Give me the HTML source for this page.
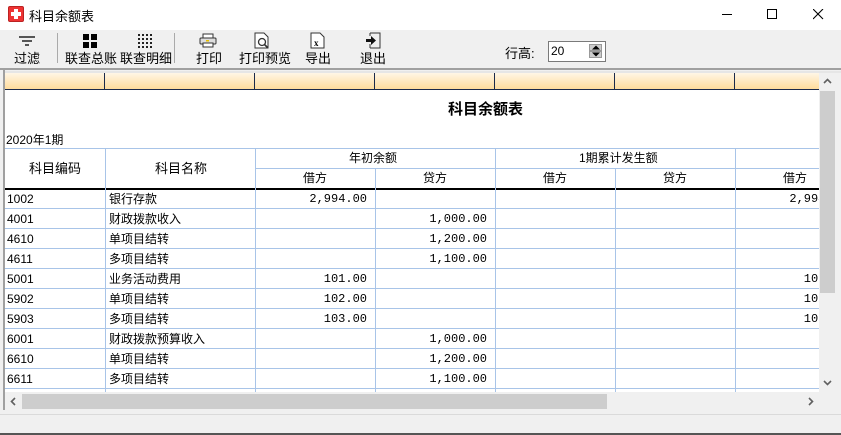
<!DOCTYPE html>
<html><head><meta charset="utf-8"><style>
*{margin:0;padding:0;box-sizing:border-box}
body{width:841px;height:435px;position:relative;overflow:hidden;background:#f0f0f0;font-family:"Liberation Sans","Noto Sans CJK SC",sans-serif;font-size:12px;color:#000}
.a{position:absolute}
.tb{left:0;top:0;width:841px;height:30px;background:#fff}
.btn{position:absolute;top:46px;font-size:13px;text-align:center}
.grid{left:5px;top:73px;width:814px;height:319px;background:#fff;overflow:hidden}
.hs{top:0;height:17px;background:linear-gradient(#fff6e6,#ffdc9c);border-bottom:1px solid #1c2a4a;border-right:1px solid #1c2a4a}
.vl{position:absolute;width:1px;background:#a8c4e8}
.hl{position:absolute;height:1px;background:#a8c4e8;left:0;width:900px}
.c{position:absolute;height:20px;line-height:20px;font-size:12px;white-space:nowrap}
.n{font-family:"Liberation Mono",monospace;font-size:12px;text-align:right}
</style></head><body>
<div class="a tb"></div>
<div class="a" style="left:8px;top:6px;width:16px;height:16px;background:#e33;border-radius:2px;border:1px solid #b22"><div style="position:absolute;left:5px;top:2px;width:4px;height:10px;background:#fff"></div><div style="position:absolute;left:2px;top:5px;width:10px;height:4px;background:#fff"></div></div>
<div class="a" style="left:29px;top:6px;font-size:13px">科目余额表</div>
<div class="a" style="left:722px;top:14px;width:10px;height:1px;background:#000"></div>
<div class="a" style="left:767px;top:9px;width:10px;height:10px;border:1px solid #000"></div>
<svg class="a" style="left:813px;top:9px" width="11" height="11"><path d="M0 0L10 10M10 0L0 10" stroke="#000" stroke-width="1.1"/></svg>
<!-- toolbar -->
<svg class="a" style="left:18px;top:36px" width="18" height="10"><path d="M1 1h16M4 5h10M7 9h4" stroke="#222" stroke-width="1.5"/></svg>
<div class="btn" style="left:14px;top:48px">过滤</div>
<div class="a" style="left:57px;top:33px;width:1px;height:30px;background:#aaa"></div>
<svg class="a" style="left:83px;top:34px" width="14" height="14"><rect x="0" y="0" width="6" height="6"/><rect x="8" y="0" width="6" height="6"/><rect x="0" y="8" width="6" height="6"/><rect x="8" y="8" width="6" height="6"/></svg>
<div class="btn" style="left:65px;top:48px">联查总账</div>
<svg class="a" style="left:138px;top:34px" width="14" height="14" fill="#222"><g id="r"><rect x="0" y="0" width="2" height="2"/><rect x="4" y="0" width="2" height="2"/><rect x="8" y="0" width="2" height="2"/><rect x="12" y="0" width="2" height="2"/></g><use href="#r" y="4"/><use href="#r" y="8"/><use href="#r" y="12"/></svg>
<div class="btn" style="left:120px;top:48px">联查明细</div>
<div class="a" style="left:174px;top:33px;width:1px;height:30px;background:#aaa"></div>
<svg class="a" style="left:199px;top:33px" width="18" height="15"><rect x="4" y="1" width="10" height="4" fill="#fff" stroke="#333"/><rect x="1" y="5" width="16" height="6" rx="1" fill="#ddd" stroke="#333"/><rect x="4" y="10" width="10" height="4" fill="#fff" stroke="#333"/><rect x="7" y="7" width="3" height="1.5" fill="#e8c000"/></svg>
<div class="btn" style="left:196px;top:48px">打印</div>
<svg class="a" style="left:254px;top:32px" width="16" height="17"><path d="M1 1h9l4 4v11H1z" fill="#fff" stroke="#333"/><circle cx="8" cy="10" r="3.5" fill="none" stroke="#333" stroke-width="1.3"/><path d="M10.5 12.5l3 3" stroke="#333" stroke-width="1.6"/></svg>
<div class="btn" style="left:239px;top:48px">打印预览</div>
<svg class="a" style="left:310px;top:32px" width="15" height="17"><path d="M1 1h9l4 4v11H1z" fill="#fff" stroke="#333"/><text x="4" y="14" font-size="9" font-family="Liberation Serif" font-weight="bold">x</text></svg>
<div class="btn" style="left:305px;top:48px">导出</div>
<svg class="a" style="left:365px;top:32px" width="16" height="17"><path d="M5 1h10v15H5M5 1v3M5 12v4" fill="none" stroke="#333"/><path d="M1 7h5V4l5 4.5-5 4.5V10H1z" fill="#111"/></svg>
<div class="btn" style="left:360px;top:48px">退出</div>
<div class="a" style="left:505px;top:43px;font-size:13px">行高:</div>
<div class="a" style="left:548px;top:41px;width:58px;height:21px;border:1px solid #7a7a7a;background:#fff;font-size:12px;line-height:19px;padding-left:2px">20</div>
<div class="a" style="left:589px;top:44px;width:13px;height:7px;background:#ccc;border:1px solid #999"></div>
<div class="a" style="left:589px;top:51px;width:13px;height:7px;background:#ccc;border:1px solid #999"></div>
<svg class="a" style="left:591px;top:45px" width="10" height="12"><path d="M1 4.5L5 0.5 9 4.5zM1 7.5L5 11.5 9 7.5z" fill="#000"/></svg>
<!-- grid frame -->
<div class="a" style="left:0;top:68px;width:841px;height:2px;background:#a0a0a0"></div>
<div class="a" style="left:3px;top:70px;width:2px;height:340px;background:#a0a0a0"></div>
<div class="a" style="left:5px;top:71px;width:836px;height:2px;background:#e6e6e6"></div>
<div class="a grid">
 <div class="a hs" style="left:0;width:100px"></div>
 <div class="a hs" style="left:100px;width:150px"></div>
 <div class="a hs" style="left:250px;width:120px"></div>
 <div class="a hs" style="left:370px;width:120px"></div>
 <div class="a hs" style="left:490px;width:120px"></div>
 <div class="a hs" style="left:610px;width:120px"></div>
 <div class="a hs" style="left:730px;width:120px"></div>
 <div class="a" style="left:443px;top:25px;font-size:15px;font-weight:bold">科目余额表</div>
 <div class="a" style="left:1px;top:58px;font-size:12px">2020年1期</div>
 <div class="hl" style="top:75px"></div>
 <div class="hl" style="top:95px;left:250px"></div>
 <div class="a" style="left:0;top:115px;width:900px;height:2px;background:#000"></div>
 <div class="hl" style="top:135px"></div><div class="hl" style="top:155px"></div><div class="hl" style="top:175px"></div><div class="hl" style="top:195px"></div><div class="hl" style="top:215px"></div><div class="hl" style="top:235px"></div><div class="hl" style="top:255px"></div><div class="hl" style="top:275px"></div><div class="hl" style="top:295px"></div><div class="hl" style="top:315px"></div>
 <div class="vl" style="left:100px;top:75px;height:260px"></div>
 <div class="vl" style="left:250px;top:75px;height:260px"></div>
 <div class="vl" style="left:370px;top:95px;height:240px"></div>
 <div class="vl" style="left:490px;top:75px;height:260px"></div>
 <div class="vl" style="left:610px;top:95px;height:240px"></div>
 <div class="vl" style="left:730px;top:75px;height:260px"></div>
 <div class="c" style="left:24px;top:86px;font-size:13px">科目编码</div>
 <div class="c" style="left:150px;top:86px;font-size:13px">科目名称</div>
 <div class="c" style="left:344px;top:75px;font-size:12px">年初余额</div>
 <div class="c" style="left:574px;top:75px;font-size:12px">1期累计发生额</div>
 <div class="c" style="left:298px;top:95px">借方</div>
 <div class="c" style="left:418px;top:95px">贷方</div>
 <div class="c" style="left:538px;top:95px">借方</div>
 <div class="c" style="left:658px;top:95px">贷方</div>
 <div class="c" style="left:778px;top:95px">借方</div>
 <div style="position:absolute;left:0;top:116px;width:900px">
  <div class="c" style="left:2px;top:0">1002</div><div class="c" style="left:104px;top:0">银行存款</div><div class="c n" style="left:250px;width:112px;top:0">2,994.00</div><div class="c n" style="left:730px;width:112px;top:0">2,994.00</div>
  <div class="c" style="left:2px;top:20px">4001</div><div class="c" style="left:104px;top:20px">财政拨款收入</div><div class="c n" style="left:370px;width:112px;top:20px">1,000.00</div>
  <div class="c" style="left:2px;top:40px">4610</div><div class="c" style="left:104px;top:40px">单项目结转</div><div class="c n" style="left:370px;width:112px;top:40px">1,200.00</div>
  <div class="c" style="left:2px;top:60px">4611</div><div class="c" style="left:104px;top:60px">多项目结转</div><div class="c n" style="left:370px;width:112px;top:60px">1,100.00</div>
  <div class="c" style="left:2px;top:80px">5001</div><div class="c" style="left:104px;top:80px">业务活动费用</div><div class="c n" style="left:250px;width:112px;top:80px">101.00</div><div class="c n" style="left:730px;width:112px;top:80px">101.00</div>
  <div class="c" style="left:2px;top:100px">5902</div><div class="c" style="left:104px;top:100px">单项目结转</div><div class="c n" style="left:250px;width:112px;top:100px">102.00</div><div class="c n" style="left:730px;width:112px;top:100px">102.00</div>
  <div class="c" style="left:2px;top:120px">5903</div><div class="c" style="left:104px;top:120px">多项目结转</div><div class="c n" style="left:250px;width:112px;top:120px">103.00</div><div class="c n" style="left:730px;width:112px;top:120px">103.00</div>
  <div class="c" style="left:2px;top:140px">6001</div><div class="c" style="left:104px;top:140px">财政拨款预算收入</div><div class="c n" style="left:370px;width:112px;top:140px">1,000.00</div>
  <div class="c" style="left:2px;top:160px">6610</div><div class="c" style="left:104px;top:160px">单项目结转</div><div class="c n" style="left:370px;width:112px;top:160px">1,200.00</div>
  <div class="c" style="left:2px;top:180px">6611</div><div class="c" style="left:104px;top:180px">多项目结转</div><div class="c n" style="left:370px;width:112px;top:180px">1,100.00</div>
 </div>
</div>
<!-- vertical scrollbar -->
<div class="a" style="left:819px;top:73px;width:17px;height:320px;background:#f0f0f0"></div>
<div class="a" style="left:820px;top:91px;width:15px;height:202px;background:#cdcdcd"></div>
<svg class="a" style="left:823px;top:78px" width="9" height="6"><path d="M1 5L4.5 1.5 8 5" fill="none" stroke="#606060" stroke-width="1.6"/></svg>
<svg class="a" style="left:823px;top:380px" width="9" height="6"><path d="M1 1L4.5 4.5 8 1" fill="none" stroke="#606060" stroke-width="1.6"/></svg>
<!-- horizontal scrollbar -->
<div class="a" style="left:5px;top:393px;width:831px;height:17px;background:#f0f0f0"></div>
<div class="a" style="left:22px;top:394px;width:585px;height:15px;background:#cdcdcd"></div>
<svg class="a" style="left:10px;top:397px" width="6" height="9"><path d="M5 1L1.5 4.5 5 8" fill="none" stroke="#606060" stroke-width="1.6"/></svg>
<svg class="a" style="left:808px;top:397px" width="6" height="9"><path d="M1 1L4.5 4.5 1 8" fill="none" stroke="#606060" stroke-width="1.6"/></svg>
<div class="a" style="left:0;top:414px;width:841px;height:1px;background:#dadada"></div>
<div class="a" style="left:0;top:433px;width:841px;height:2px;background:#555"></div>
</body></html>
